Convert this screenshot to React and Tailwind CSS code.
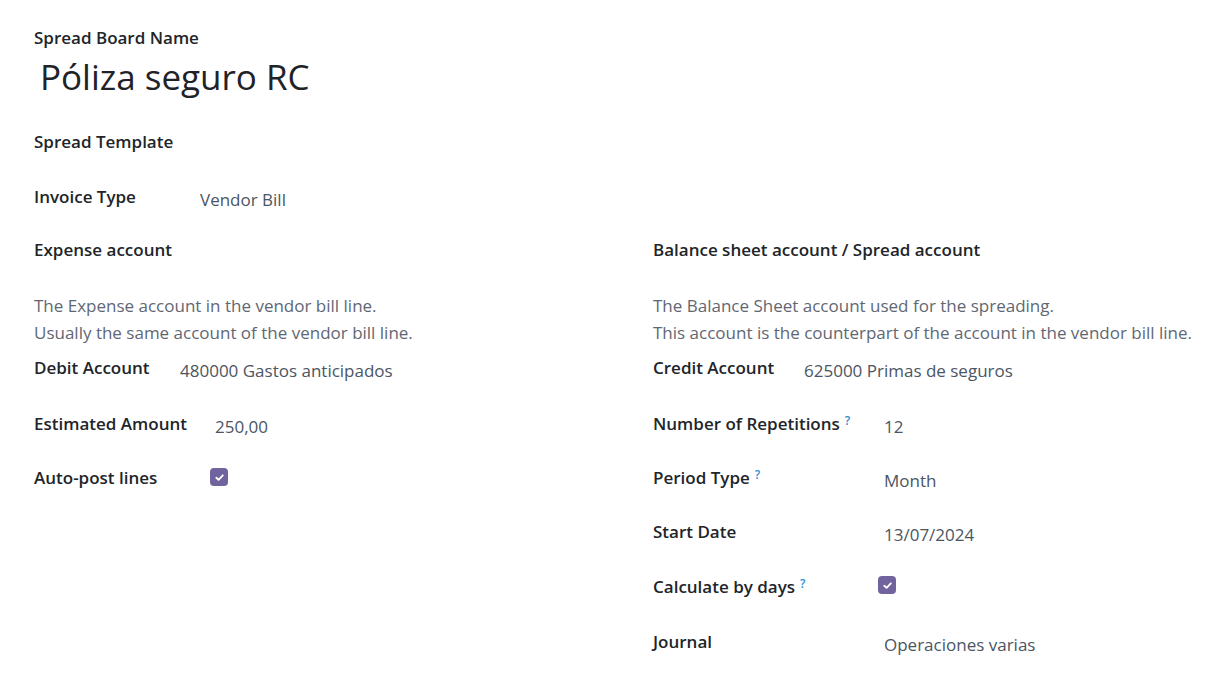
import React from 'react';

const font = { fontFamily: '"Open Sans", "Noto Sans", sans-serif' };

function Check({ className = '' }) {
  return (
    <span className={`inline-flex h-[18px] w-[18px] items-center justify-center rounded-[4px] bg-[#71639e] ${className}`}>
      <svg width="11" height="11" viewBox="0 0 12 12" fill="none">
        <path d="M2.5 6.3 L5 8.6 L9.6 3.6" stroke="white" strokeWidth="2" strokeLinecap="round" strokeLinejoin="round" />
      </svg>
    </span>
  );
}

function Help() {
  return <sup className="relative -top-[5px] ml-[5px] text-[12px] font-semibold text-[#2f8fd0]">?</sup>;
}

const labelCls = 'text-[17px] leading-[24px] font-semibold text-[#212529]';

function Field({ label, help, labelW, children, className = '' }) {
  return (
    <div className={`flex items-start h-[24px] ${className}`}>
      <div className={`${labelW} shrink-0 ${labelCls}`}>
        {label}
        {help && <Help />}
      </div>
      <div className="pt-[3px] text-[17px] leading-[24px] text-[#4b5563]">{children}</div>
    </div>
  );
}

export default function App() {
  return (
    <div className="min-h-[694px] bg-white pt-[26px] pl-[34px] pr-[4px]" style={font}>
      <div className={`h-[24px] ${labelCls}`}>Spread Board Name</div>
      <div className="mt-[5px] ml-[6px] h-[44px] text-[35px] leading-[44px] text-[#1f2328]">Póliza seguro RC</div>

      <div className={`mt-[31px] h-[24px] ${labelCls}`}>Spread Template</div>
      <Field label="Invoice Type" labelW="w-[166px]" className="mt-[31px]">Vendor Bill</Field>

      <div className="mt-[29px] grid grid-cols-[619px_1fr]">
        <div>
          <div className={`h-[24px] ${labelCls}`}>Expense account</div>
          <div className="mt-[30px] text-[17px] leading-[27px] text-[#5f6773]">
            <div>The Expense account in the vendor bill line.</div>
            <div>Usually the same account of the vendor bill line.</div>
          </div>
          <Field label="Debit Account" labelW="w-[146px]" className="mt-[10px]">480000 Gastos anticipados</Field>
          <Field label="Estimated Amount" labelW="w-[181px]" className="mt-[32px]">250,00</Field>
          <div className="mt-[30px] flex items-start h-[24px]">
            <div className={`w-[176px] shrink-0 ${labelCls}`}>Auto-post lines</div>
            <Check className="mt-[2px]" />
          </div>
        </div>

        <div>
          <div className={`h-[24px] ${labelCls}`}>Balance sheet account / Spread account</div>
          <div className="mt-[30px] text-[17px] leading-[27px] text-[#5f6773] whitespace-nowrap">
            <div>The Balance Sheet account used for the spreading.</div>
            <div>This account is the counterpart of the account in the vendor bill line.</div>
          </div>
          <Field label="Credit Account" labelW="w-[151px]" className="mt-[10px]">625000 Primas de seguros</Field>
          <Field label="Number of Repetitions" help labelW="w-[231px]" className="mt-[32px]">12</Field>
          <Field label="Period Type" help labelW="w-[231px]" className="mt-[30px]">Month</Field>
          <Field label="Start Date" labelW="w-[231px]" className="mt-[30px]">13/07/2024</Field>
          <div className="mt-[31px] flex items-start h-[24px]">
            <div className={`w-[225px] shrink-0 ${labelCls}`}>
              Calculate by days<Help />
            </div>
            <Check className="mt-[1px]" />
          </div>
          <Field label="Journal" labelW="w-[231px]" className="mt-[31px]">Operaciones varias</Field>
        </div>
      </div>
    </div>
  );
}
